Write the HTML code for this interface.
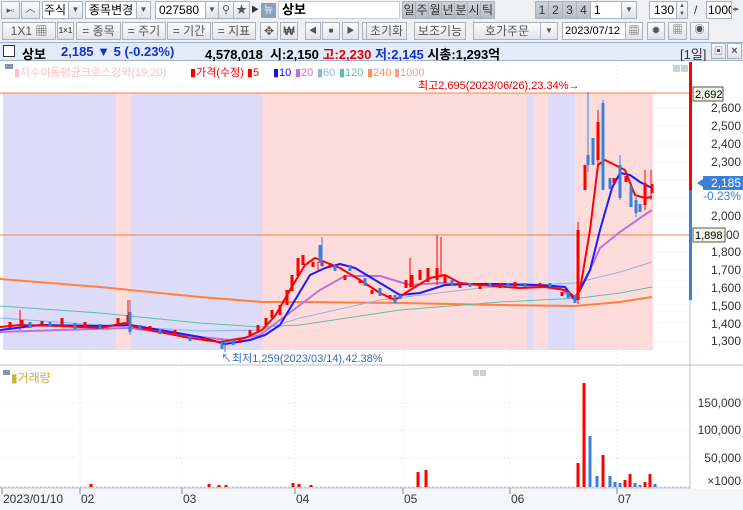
<!DOCTYPE html>
<html><head><meta charset="utf-8"><style>
*{margin:0;padding:0;box-sizing:border-box}
body{width:743px;height:510px;overflow:hidden;background:#fff;font-family:"Liberation Sans","Noto Sans CJK KR","NanumGothic",sans-serif;font-size:12px;position:relative}
.a{position:absolute}
.row{position:absolute;left:0;width:743px;background:#eef0f3}
.b{position:absolute;height:18px;border:1px solid #a9b2bd;background:linear-gradient(#fbfcfd,#dfe3e8);color:#555;text-align:center;line-height:16px;font-size:12px;white-space:nowrap;overflow:hidden}
.w{position:absolute;height:18px;border:1px solid #a9b2bd;background:#fff;line-height:16px;padding-left:3px;font-size:12px;white-space:nowrap;overflow:hidden}
.p{background:linear-gradient(#cdd3da,#b5bec8);color:#333}
</style></head><body>
<div class="row" style="top:0;height:42px"></div>
<!-- row1 -->
<div class="b" style="left:1px;top:1px;width:19px;font-size:9px">▸▫</div>
<div class="b" style="left:21px;top:1px;width:19px;font-size:10px">︿</div>
<div class="w" style="left:42px;top:1px;width:27px;padding-left:1px">주식</div>
<div class="b" style="left:68px;top:1px;width:15px;font-size:8px">▼</div>
<div class="w" style="left:85px;top:1px;width:52px">종목변경</div>
<div class="b" style="left:136px;top:1px;width:15px;font-size:8px">▼</div>
<div class="w" style="left:155px;top:1px;width:51px">027580</div>
<div class="b" style="left:205px;top:1px;width:14px;font-size:8px">▼</div>
<div class="b" style="left:218px;top:1px;width:16px;font-size:11px">⚲</div>
<div class="b" style="left:233px;top:1px;width:17px;font-size:11px">★</div>
<div class="a" style="left:251px;top:4px;font-size:8px;color:#333">▶</div>
<div class="a" style="left:261px;top:3px;width:15px;height:15px;background:#8ba0bb;color:#fff;font-size:10px;text-align:center;line-height:15px">뉴</div>
<div class="w" style="left:278px;top:1px;width:122px;font-weight:bold;font-size:13px;border-color:#c8ced6">상보</div>
<div class="b p" style="left:402px;top:1px;width:14px">일</div><div class="b p" style="left:415px;top:1px;width:14px">주</div><div class="b p" style="left:428px;top:1px;width:14px">월</div><div class="b p" style="left:441px;top:1px;width:14px">년</div><div class="b p" style="left:454px;top:1px;width:14px">분</div><div class="b p" style="left:467px;top:1px;width:14px">시</div><div class="b p" style="left:480px;top:1px;width:15px">틱</div>
<div class="b p" style="left:535px;top:1px;width:14px">1</div><div class="b p" style="left:548px;top:1px;width:15px">2</div><div class="b p" style="left:562px;top:1px;width:15px">3</div><div class="b p" style="left:576px;top:1px;width:15px">4</div>
<div class="w" style="left:590px;top:1px;width:32px">1</div>
<div class="b" style="left:621px;top:1px;width:16px;font-size:8px">▼</div>
<div class="w" style="left:649px;top:1px;width:28px;text-align:right;padding-right:2px">130</div>
<div class="b" style="left:676px;top:1px;width:12px;font-size:6px;line-height:8px">▲<br>▼</div>
<div class="a" style="left:694px;top:3px;color:#333">/</div>
<div class="w" style="left:706px;top:1px;width:26px;padding-left:1px">1000</div>
<div class="a" style="left:732px;top:5px;font-size:7px;color:#666">◂▸</div>
<!-- row2 -->
<div class="b" style="left:2px;top:22px;width:54px">1X1 ▦</div>
<div class="b" style="left:57px;top:22px;width:17px;font-size:8px;font-weight:bold">1×1</div>
<div class="b" style="left:76px;top:22px;width:45px">= 종목</div>
<div class="b" style="left:122px;top:22px;width:44px">= 주기</div>
<div class="b" style="left:167px;top:22px;width:44px">= 기간</div>
<div class="b" style="left:212px;top:22px;width:44px">= 지표</div>
<div class="b" style="left:260px;top:22px;width:18px">✥</div>
<div class="b" style="left:280px;top:22px;width:18px;font-weight:bold">₩</div>
<div class="b" style="left:305px;top:22px;width:16px;font-size:8px">◀</div>
<div class="b" style="left:322px;top:22px;width:18px;font-size:8px">■</div>
<div class="b" style="left:342px;top:22px;width:17px;font-size:8px">▶</div>
<div class="b" style="left:362px;top:22px;width:5px"></div>
<div class="b" style="left:366px;top:22px;width:41px">초기화</div>
<div class="b" style="left:414px;top:22px;width:52px">보조기능</div>
<div class="b" style="left:473px;top:22px;width:68px">호가주문</div>
<div class="b" style="left:540px;top:22px;width:18px;font-size:8px">▼</div>
<div class="w" style="left:562px;top:22px;width:64px;font-size:11px;padding-left:2px">2023/07/12</div>
<div class="b" style="left:625px;top:22px;width:18px;font-size:11px">▦</div>
<div class="b" style="left:647px;top:22px;width:18px;font-size:11px">✹</div>
<div class="b" style="left:668px;top:22px;width:19px;font-size:10px">▦</div>
<div class="b" style="left:690px;top:22px;width:19px;font-size:10px">◉</div>
<!-- info bar -->
<div class="a" style="left:0;top:42px;width:743px;height:19px;background:#e2ebf8;border-top:1px solid #9fb3cf;border-bottom:1px solid #9fb3cf"></div>
<div class="a" style="left:3px;top:45px;width:12px;height:12px;border:1px solid #333;background:#fff"></div>
<div class="a" style="left:22px;top:44px;font-weight:bold;font-size:13px;white-space:pre">상보</div>
<div class="a" style="left:61px;top:44px;font-weight:bold;font-size:13px;color:#1830c8;white-space:pre">2,185 ▼ 5 (-0.23%)</div>
<div class="a" style="left:205px;top:44px;font-weight:bold;font-size:13px;white-space:pre">4,578,018  시:2,150 <span style="color:#e00000">고:2,230</span> <span style="color:#1830c8">저:2,145</span> 시총:1,293억</div>
<div class="a" style="left:680px;top:44px;font-size:13px;color:#333">[1일]</div>
<div class="b" style="left:711px;top:43px;width:15px;height:16px;font-size:9px;line-height:14px">▣</div>
<div class="b" style="left:727px;top:43px;width:15px;height:16px;font-size:11px;line-height:14px;font-weight:bold">×</div>
<!-- chart -->
<svg class="a" style="left:0;top:61px" width="743" height="449" viewBox="0 61 743 449" font-family="Liberation Sans, Noto Sans CJK KR, sans-serif">
<rect x="0" y="61" width="743" height="449" fill="#fff"/>
<g>
<rect x="3" y="93" width="113" height="257" fill="#dcdcf8"/>
<rect x="116" y="93" width="15" height="257" fill="#ffdcdc"/>
<rect x="131" y="93" width="131" height="257" fill="#dcdcf8"/>
<rect x="262" y="93" width="265" height="257" fill="#ffdcdc"/>
<rect x="527" y="93" width="6" height="257" fill="#dcdcf8"/>
<rect x="533" y="93" width="15" height="257" fill="#ffdcdc"/>
<rect x="548" y="93" width="27" height="257" fill="#dcdcf8"/>
<rect x="575" y="93" width="78" height="257" fill="#ffdcdc"/>
</g>
<g stroke="#d8dce4" stroke-dasharray="1,3">
<line x1="80" y1="62" x2="80" y2="488"/><line x1="182" y1="62" x2="182" y2="488"/><line x1="295" y1="62" x2="295" y2="488"/><line x1="403" y1="62" x2="403" y2="488"/><line x1="510" y1="62" x2="510" y2="488"/><line x1="617" y1="62" x2="617" y2="488"/>
<line x1="653" y1="108" x2="690" y2="108"/><line x1="653" y1="126" x2="690" y2="126"/><line x1="653" y1="144" x2="690" y2="144"/><line x1="653" y1="162" x2="690" y2="162"/><line x1="653" y1="180" x2="690" y2="180"/><line x1="653" y1="198" x2="690" y2="198"/><line x1="653" y1="216" x2="690" y2="216"/><line x1="653" y1="252" x2="690" y2="252"/><line x1="653" y1="270" x2="690" y2="270"/><line x1="653" y1="287" x2="690" y2="287"/><line x1="653" y1="305" x2="690" y2="305"/><line x1="653" y1="323" x2="690" y2="323"/><line x1="653" y1="341" x2="690" y2="341"/>
<line x1="0" y1="403" x2="690" y2="403"/><line x1="0" y1="430" x2="690" y2="430"/><line x1="0" y1="458" x2="690" y2="458"/>
</g>
<line x1="0" y1="93" x2="690" y2="93" stroke="#ff8040"/>
<line x1="0" y1="235" x2="690" y2="235" stroke="#ff8040"/>
<g fill="none" stroke-linejoin="round">
<polyline stroke="#ff8040" stroke-width="2" points="0,279 100,287 200,297 262,302 300,302 400,303 500,305 575,306 620,302 652,297"/>
<polyline stroke="#5cbfa8" stroke-width="1" points="0,306 100,313 200,323 260,327 300,325 400,310 500,302 580,298 620,293 652,287"/>
<polyline stroke="#8fb6e0" stroke-width="1" points="0,318 100,325 200,331 260,330 300,318 380,300 480,288 575,283 620,272 652,262"/>
<polyline stroke="#c070d8" stroke-width="2" points="0,332 60,330 130,328 180,335 230,340 260,335 280,320 300,305 320,290 345,276 380,276 410,285 440,283 480,285 520,285 560,288 575,300 590,270 600,248 620,232 640,218 652,210"/>
<polyline stroke="#1a1aff" stroke-width="2" points="0,330 40,325 100,326 130,325 160,330 200,337 225,344 250,340 265,335 280,325 295,300 310,275 325,268 340,264 355,268 375,280 400,295 420,293 445,285 470,284 500,284 540,285 565,287 575,300 590,270 600,230 612,188 620,173 630,175 640,182 652,188"/>
<polyline stroke="#f00" stroke-width="2" points="0,327 20,325 60,326 100,328 125,323 135,327 160,332 190,338 220,342 245,338 262,330 275,316 290,290 305,265 315,258 325,262 340,268 360,280 380,293 395,300 410,290 430,278 445,275 460,283 480,285 520,288 545,287 565,290 575,297 580,290 590,230 598,165 605,160 615,165 625,170 635,195 645,198 652,197"/>
</g>
<g stroke="#f00" stroke-width="3">
<path d="M10 322v6M22 320v6M42 321v5M62 318v8M85 322v5M118 318v6M128 315v9M150 326v4M175 330v3M205 338v3M240 338v5M250 330v6M258 325v7M266 318v8M272 310v8M280 305v10M287 290v15M292 275v16M298 258v18M303 255v10M313 262v5M322 262v4M330 263v4M345 275v5M360 280v3M372 290v4M390 295v4M406 280v8M412 275v12M420 270v10M428 268v14M437 268v12M445 275v8M460 282v6M480 285v4M500 283v5M515 282v5M540 283v4M562 292v4M578 230v70M585 165v25M598 122v38M614 178v5M626 176v6M645 183v22M652 184v9"/>
</g>
<g stroke="#f00" stroke-width="1">
<path d="M20 310v20M128 300v25M318 262v8M410 258v30M437 235v50M441 237v40M578 222v82M598 110v60M645 170v40M651 170v30"/>
</g>
<g stroke="#3a7fd8" stroke-width="3">
<path d="M30 322v6M50 322v5M75 323v6M100 324v5M130 312v20M140 325v5M160 329v5M190 337v4M222 342v7M233 340v5M320 245v18M335 265v6M350 265v6M365 278v8M380 288v8M395 295v8M400 295v4M452 280v6M470 283v4M490 283v4M508 283v4M525 283v4M550 283v4M568 292v6M575 295v8M588 155v10M593 138v27M603 103v87M610 178v11M620 165v33M631 186v21M636 200v13M640 204v8"/>
</g>
<g stroke="#3a7fd8" stroke-width="1">
<path d="M130 300v35M225 340v12M322 237v30M588 92v80M603 100v90M620 155v45M636 195v22"/>
</g>
<rect x="5" y="64" width="8" height="5" fill="#8895b0"/>
<text x="14" y="76" font-size="11" fill="#f8c0c0">▮지수이동평균크로스강약(19,20)</text>
<text x="190" y="76" font-size="11" fill="#f00">▮가격(수정) ▮5</text>
<text x="273" y="76" font-size="11" fill="#1010ff">▮10</text>
<text x="295" y="76" font-size="11" fill="#c070d8">▮20</text>
<text x="317" y="76" font-size="11" fill="#8fb6e0">▮60</text>
<text x="339" y="76" font-size="11" fill="#5cbfa8">▮120</text>
<text x="367" y="76" font-size="11" fill="#ff9060">▮240</text>
<text x="394" y="76" font-size="11" fill="#ffa080">▮1000</text>
<rect x="673" y="65" width="7" height="7" fill="#c8d0dc"/><rect x="681" y="65" width="7" height="7" fill="#c8d0dc"/>
<text x="418" y="89" font-size="11" fill="#e00000">최고2,695(2023/06/26),23.34%→</text>
<text x="221" y="362" font-size="11" fill="#3a6ac8">↖최저1,259(2023/03/14),42.38%</text>
<line x1="690" y1="62" x2="690" y2="510" stroke="#b8c0cc"/>
<rect x="689" y="62" width="3" height="128" fill="#f00"/>
<rect x="689" y="190" width="3" height="110" fill="#3a7fd8"/>
<g font-size="12" fill="#333" text-anchor="end">
<text x="741" y="112">2,600</text><text x="741" y="130">2,500</text><text x="741" y="148">2,400</text><text x="741" y="166">2,300</text><text x="741" y="220">2,000</text><text x="741" y="256">1,800</text><text x="741" y="274">1,700</text><text x="741" y="292">1,600</text><text x="741" y="310">1,500</text><text x="741" y="328">1,400</text><text x="741" y="345">1,300</text>
</g>
<rect x="693" y="87" width="30" height="14" fill="#f0f8e8" stroke="#555"/>
<text x="695" y="98" font-size="11" fill="#000">2,692</text>
<rect x="693" y="228" width="32" height="14" fill="#f0f8e8" stroke="#555"/>
<text x="695" y="239" font-size="11" fill="#000">1,898</text>
<text x="726" y="239" font-size="12" fill="#333">00</text>
<polygon points="697,183 703,179 703,187" fill="#3a7fd8"/>
<rect x="703" y="176" width="40" height="14" fill="#3a7fd8"/>
<text x="741" y="187" font-size="12" fill="#fff" text-anchor="end">2,185</text>
<text x="741" y="200" font-size="12" fill="#3a7fd8" text-anchor="end">-0.23%</text>
<line x1="0" y1="365" x2="743" y2="365" stroke="#b8c0cc"/>
<rect x="3" y="370" width="7" height="5" fill="#8895b0"/>
<text x="11" y="382" font-size="12" fill="#c8b040">▮거래량</text>
<rect x="473" y="370" width="6" height="6" fill="#c8d0dc"/><rect x="480" y="370" width="6" height="6" fill="#c8d0dc"/>
<g font-size="12" fill="#333" text-anchor="end">
<text x="741" y="407">150,000</text><text x="741" y="434">100,000</text><text x="741" y="462">50,000</text><text x="741" y="485">×1000</text>
</g>
<line x1="0" y1="487" x2="690" y2="487" stroke="#c0c8d4" stroke-dasharray="2,2"/>
<g stroke="#f00" stroke-width="3">
<path d="M91 487v-3M209 487v-3M219 487v-2M226 487v-2M293 487v-4M299 487v-3M311 487v-2M418 487v-15M426 487v-17M578 487v-24M584 487v-104M603 487v-32M625 487v-7M630 487v-13M645 487v-5M650 487v-13"/>
</g>
<g stroke="#3a7fd8" stroke-width="3">
<path d="M590 487v-51M597 487v-11M610 487v-11M615 487v-5M620 487v-4M635 487v-4M640 487v-2M655 487v-3"/>
</g>
<line x1="0" y1="488" x2="690" y2="488" stroke="#b8c0cc"/>
<rect x="0" y="489" width="743" height="21" fill="#f4f6f9"/>
<g stroke="#888"><line x1="2" y1="488" x2="2" y2="494"/><line x1="80" y1="488" x2="80" y2="494"/><line x1="182" y1="488" x2="182" y2="494"/><line x1="295" y1="488" x2="295" y2="494"/><line x1="403" y1="488" x2="403" y2="494"/><line x1="510" y1="488" x2="510" y2="494"/><line x1="617" y1="488" x2="617" y2="494"/></g>
<g font-size="12" fill="#333">
<text x="3" y="503">2023/01/10</text><text x="81" y="503">02</text><text x="183" y="503">03</text><text x="296" y="503">04</text><text x="404" y="503">05</text><text x="511" y="503">06</text><text x="618" y="503">07</text>
</g>
</svg>
</body></html>
